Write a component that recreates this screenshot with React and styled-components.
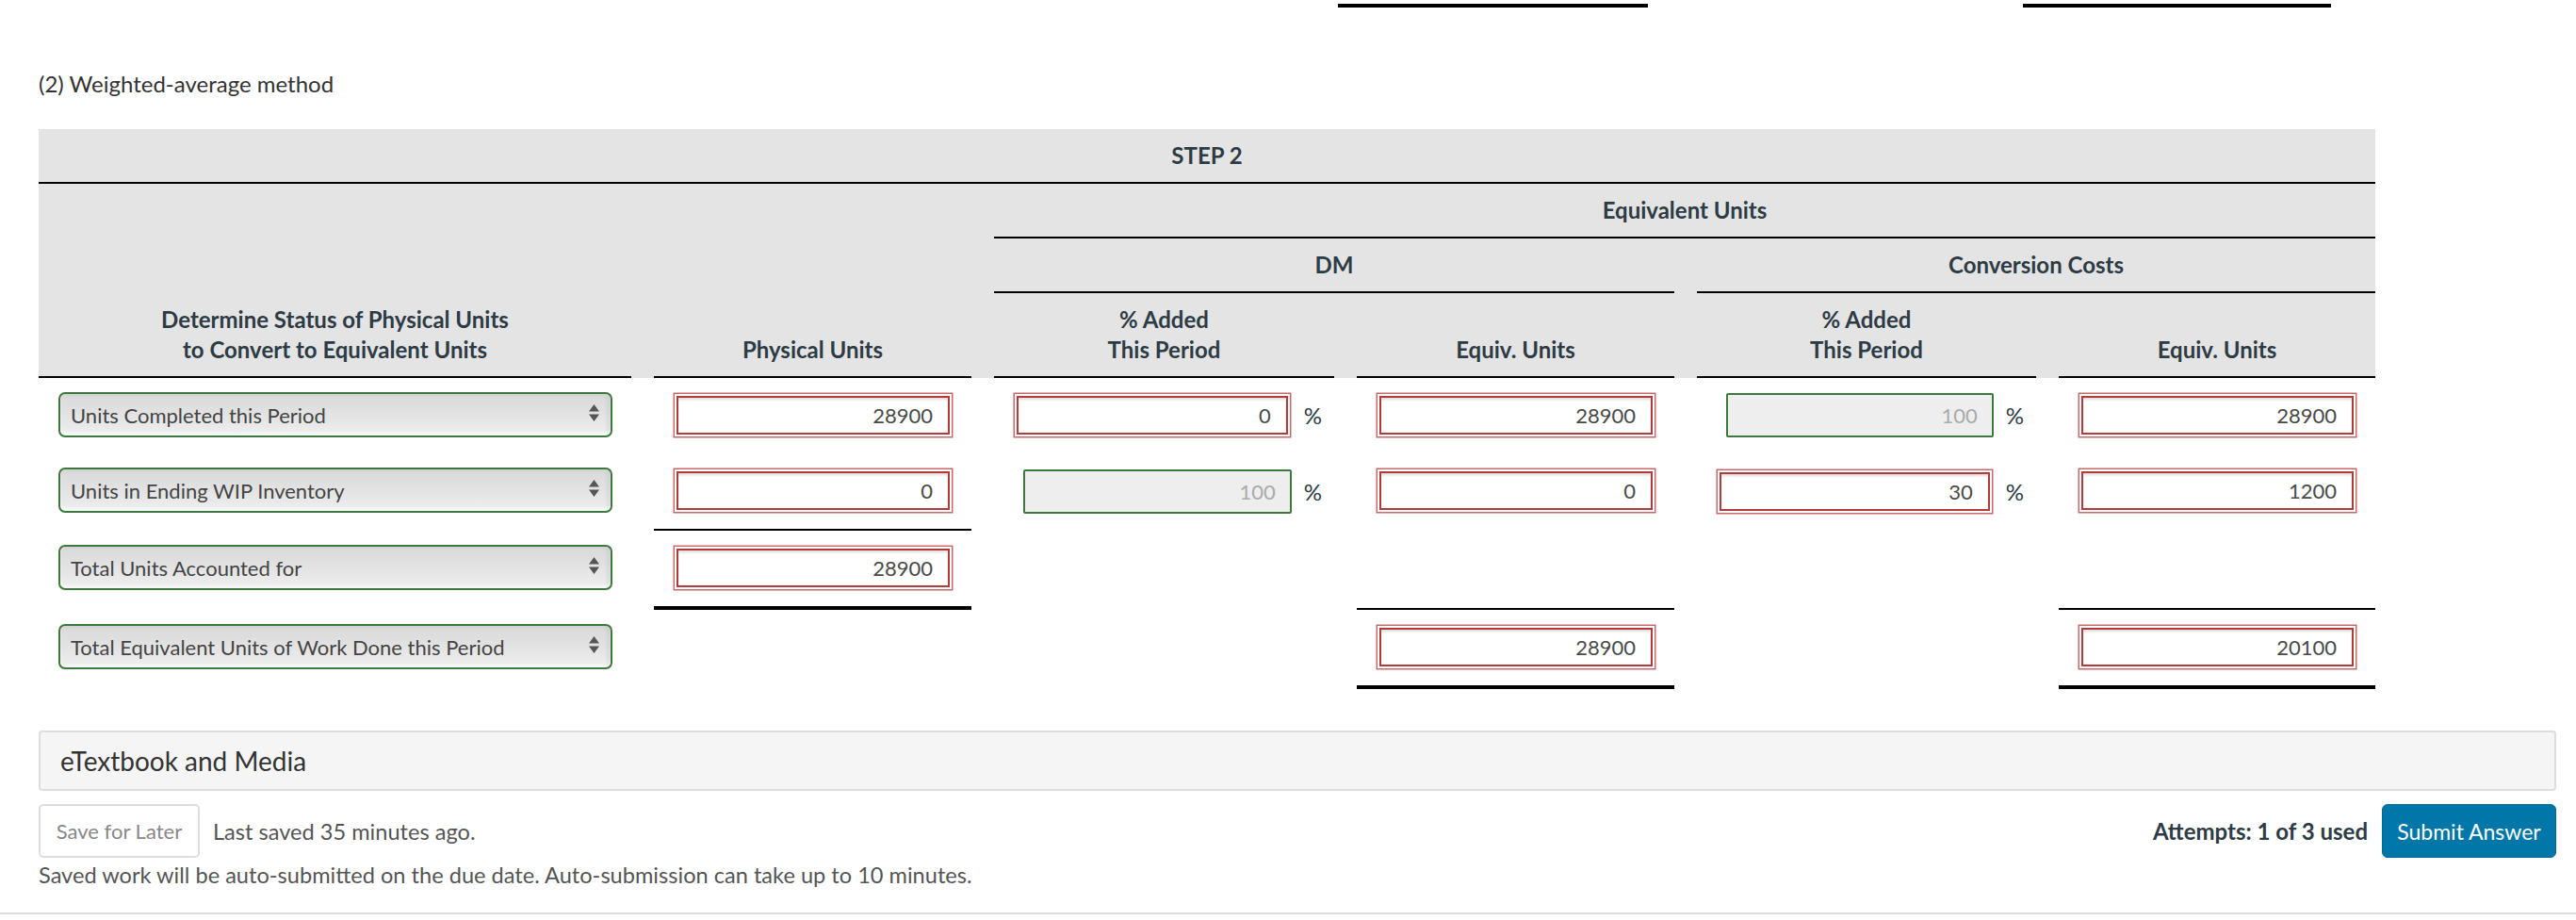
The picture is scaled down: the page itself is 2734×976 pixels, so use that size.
import React from 'react'
import styled, {createGlobalStyle} from 'styled-components'

const GlobalStyle = createGlobalStyle`
    body {
        margin: 0;
        background: #fff;
        font-family: Lato, "Noto Sans", sans-serif;
        color: #333;
    }
    * {
        box-sizing: border-box;
    }
`

const COLUMNS = '629px 337px 361px 337px 360px 336px'

const ArrowIcon = () => (
    <svg width="11" height="18" viewBox="0 0 11 18">
        <polygon points="0,7.5 5.5,0 11,7.5" fill="#555" />
        <polygon points="0,10.5 11,10.5 5.5,18" fill="#555" />
    </svg>
)

const StatusSelect = ({label}) => (
    <SelectWrap>
        <Select defaultValue={label}>
            <option>{label}</option>
        </Select>
        <SelectArrow>
            <ArrowIcon />
        </SelectArrow>
    </SelectWrap>
)

const PercentField = ({value, given}) => (
    <PercentCell>
        {given ? <GivenInput defaultValue={value} readOnly /> : <AnswerInput defaultValue={value} readOnly />}
        <PercentSign>%</PercentSign>
    </PercentCell>
)

const App = () => {
    return (
        <>
            <GlobalStyle />
            <Main>
                <TopRule>
                    <RuleSegment $left={1379} $width={329} />
                    <RuleSegment $left={398} $width={327} />
                </TopRule>

                <Heading>(2) Weighted-average method</Heading>

                <HeadGrid>
                    <HeadCell $col="1 / -1" $row="1">STEP 2</HeadCell>
                    <HeadCell $col="1" $row="2 / 5" $bottom>
                        Determine Status of Physical Units<br />to Convert to Equivalent Units
                    </HeadCell>
                    <HeadCell $col="2" $row="2 / 5" $bottom>Physical Units</HeadCell>
                    <HeadCell $col="3 / 7" $row="2">Equivalent Units</HeadCell>
                    <HeadCell $col="3 / 5" $row="3">DM</HeadCell>
                    <HeadCell $col="5 / 7" $row="3">Conversion Costs</HeadCell>
                    <HeadCell $col="3" $row="4">% Added<br />This Period</HeadCell>
                    <HeadCell $col="4" $row="4" $bottom>Equiv. Units</HeadCell>
                    <HeadCell $col="5" $row="4">% Added<br />This Period</HeadCell>
                    <HeadCell $col="6" $row="4" $bottom>Equiv. Units</HeadCell>
                </HeadGrid>

                <BodyGrid>
                    <SelectCell><StatusSelect label="Units Completed this Period" /></SelectCell>
                    <Cell><AnswerInput defaultValue="28900" readOnly /></Cell>
                    <PercentField value="0" />
                    <Cell><AnswerInput defaultValue="28900" readOnly /></Cell>
                    <PercentField value="100" given />
                    <Cell><AnswerInput defaultValue="28900" readOnly /></Cell>

                    <SelectCell><StatusSelect label="Units in Ending WIP Inventory" /></SelectCell>
                    <Cell $line={2}><AnswerInput defaultValue="0" readOnly /></Cell>
                    <PercentField value="100" given />
                    <Cell><AnswerInput defaultValue="0" readOnly /></Cell>
                    <PercentField value="30" />
                    <Cell><AnswerInput defaultValue="1200" readOnly /></Cell>

                    <SelectCell><StatusSelect label="Total Units Accounted for" /></SelectCell>
                    <Cell $line={4}><AnswerInput defaultValue="28900" readOnly /></Cell>
                    <Cell />
                    <Cell $line={2} />
                    <Cell />
                    <Cell $line={2} />

                    <SelectCell><StatusSelect label="Total Equivalent Units of Work Done this Period" /></SelectCell>
                    <Cell />
                    <Cell />
                    <Cell $line={4}><AnswerInput defaultValue="28900" readOnly /></Cell>
                    <Cell />
                    <Cell $line={4}><AnswerInput defaultValue="20100" readOnly /></Cell>
                </BodyGrid>

                <MediaBox>eTextbook and Media</MediaBox>

                <ActionRow>
                    <SaveButton>Save for Later</SaveButton>
                    <SavedNote>Last saved 35 minutes ago.</SavedNote>
                    <Attempts>Attempts: 1 of 3 used</Attempts>
                    <SubmitButton>Submit Answer</SubmitButton>
                </ActionRow>
                <AutoNote>Saved work will be auto-submitted on the due date. Auto-submission can take up to 10 minutes.</AutoNote>
            </Main>
        </>
    )
}

const Main = styled.div`
    padding: 0 21px 24px 41px;
    border-bottom: 2px solid #ddd;
`

const TopRule = styled.div`
    display: flex;
    height: 8px;
    padding-top: 4px;
`
const RuleSegment = styled.div`
    margin-left: ${p => p.$left}px;
    width: ${p => p.$width}px;
    height: 4px;
    background: #000;
`

const Heading = styled.div`
    margin: 65px 0 32px;
    font-size: 24px;
    line-height: 32px;
    color: #333;
`

const HeadGrid = styled.div`
    display: grid;
    grid-template-columns: ${COLUMNS};
    column-gap: 24px;
    width: 2480px;
    background: #e4e4e4;
`
const HeadCell = styled.div`
    grid-column: ${p => p.$col};
    grid-row: ${p => p.$row};
    display: flex;
    align-items: ${p => p.$bottom ? 'flex-end' : 'center'};
    justify-content: center;
    padding: 12px 0;
    border-bottom: 2px solid #000;
    font-size: 24px;
    line-height: 32px;
    font-weight: 700;
    text-align: center;
    color: #2d3b45;
`

const BodyGrid = styled.div`
    display: grid;
    grid-template-columns: ${COLUMNS};
    column-gap: 24px;
    width: 2480px;
`
const Cell = styled.div`
    padding: 15px 19px 16px 20px;
    border-bottom: ${p => p.$line ? `${p.$line}px solid #000` : 'none'};
`
const SelectCell = styled.div`
    padding: 15px 20px 16px 21px;
`
const PercentCell = styled.div`
    display: flex;
    align-items: center;
    padding: 15px 13px 16px 20px;
`
const PercentSign = styled.span`
    margin-left: 13px;
    font-size: 24px;
    color: #2d3b45;
`

const SelectWrap = styled.div`
    position: relative;
    height: 48px;
`
const Select = styled.select`
    appearance: none;
    width: 100%;
    height: 48px;
    padding: 0 40px 0 11px;
    border: 2px solid #3c7a3c;
    border-radius: 7px;
    background: linear-gradient(to bottom, #d9d9d9 0%, #e2e2e2 45%, #efefef 100%);
    box-shadow: inset 0 -3px 3px rgba(255, 255, 255, 0.7), inset -3px 0 4px rgba(0, 0, 0, 0.08);
    font-family: Lato, "Noto Sans", sans-serif;
    font-size: 22px;
    color: #444;
`
const SelectArrow = styled.span`
    position: absolute;
    right: 14px;
    top: 13px;
    display: flex;
    pointer-events: none;
`

const AnswerInput = styled.input`
    display: block;
    width: calc(100% - 8px);
    flex: 1;
    height: 41px;
    margin: 4px;
    padding: 0 16px 0 8px;
    border: 2px solid #b23c3c;
    background: #fff;
    box-shadow: 0 0 0 2px #fff, 0 0 0 3.5px #c86a6a, inset 0 3px 3px -1px rgba(0, 0, 0, 0.14);
    text-align: right;
    font-family: Lato, "Noto Sans", sans-serif;
    font-size: 22px;
    color: #4a4a4a;
    outline: none;
`
const GivenInput = styled.input`
    display: block;
    flex: 1;
    min-width: 0;
    height: 47px;
    margin: 1px 0 1px 11px;
    padding: 0 15px 0 8px;
    border: 2px solid #3c7a3c;
    border-radius: 2px;
    background: #eee;
    text-align: right;
    font-family: Lato, "Noto Sans", sans-serif;
    font-size: 22px;
    color: #aaa;
    outline: none;
`

const MediaBox = styled.div`
    margin-top: 44px;
    padding: 14px 21px;
    border: 2px solid #ddd;
    border-radius: 4px;
    background: #f5f5f5;
    font-size: 28px;
    line-height: 32px;
    color: #333;
`

const ActionRow = styled.div`
    display: flex;
    align-items: center;
    margin-top: 14px;
`
const SaveButton = styled.button`
    width: 171px;
    height: 57px;
    border: 2px solid #ddd;
    border-radius: 5px;
    background: #fff;
    font-family: Lato, "Noto Sans", sans-serif;
    font-size: 22px;
    color: #888;
`
const SavedNote = styled.span`
    margin-left: 14px;
    font-size: 23.6px;
    color: #555;
`
const Attempts = styled.span`
    margin-left: auto;
    font-size: 24px;
    font-weight: 700;
    color: #2d3b45;
`
const SubmitButton = styled.button`
    width: 185px;
    height: 57px;
    margin-left: 15px;
    border: 1px solid #006a96;
    border-radius: 6px;
    background: #0077a8;
    font-family: Lato, "Noto Sans", sans-serif;
    font-size: 23px;
    color: #fff;
`
const AutoNote = styled.div`
    margin-top: 2px;
    font-size: 23.6px;
    line-height: 32px;
    color: #555;
`

export default App
